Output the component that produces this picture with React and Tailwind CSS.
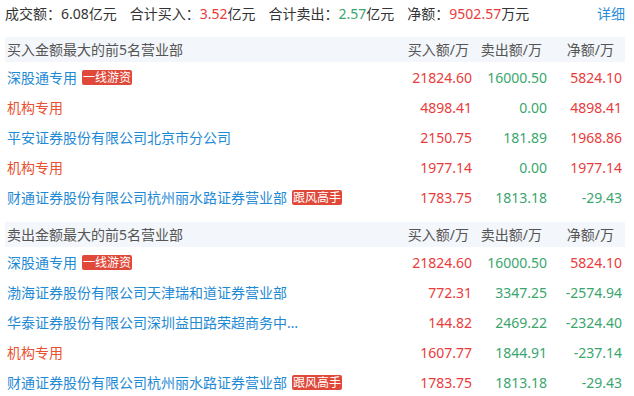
import React from 'react';

const buyList = [
  { name: '深股通专用', tag: '一线游资', buy: '21824.60', sell: '16000.50', net: '5824.10', type: 'link' },
  { name: '机构专用', buy: '4898.41', sell: '0.00', net: '4898.41', type: 'org' },
  { name: '平安证券股份有限公司北京市分公司', buy: '2150.75', sell: '181.89', net: '1968.86', type: 'link' },
  { name: '机构专用', buy: '1977.14', sell: '0.00', net: '1977.14', type: 'org' },
  { name: '财通证券股份有限公司杭州丽水路证券营业部', tag: '跟风高手', buy: '1783.75', sell: '1813.18', net: '-29.43', type: 'link' },
];

const sellList = [
  { name: '深股通专用', tag: '一线游资', buy: '21824.60', sell: '16000.50', net: '5824.10', type: 'link' },
  { name: '渤海证券股份有限公司天津瑞和道证券营业部', buy: '772.31', sell: '3347.25', net: '-2574.94', type: 'link' },
  { name: '华泰证券股份有限公司深圳益田路荣超商务中心证券营业部', buy: '144.82', sell: '2469.22', net: '-2324.40', type: 'link' },
  { name: '机构专用', buy: '1607.77', sell: '1844.91', net: '-237.14', type: 'org' },
  { name: '财通证券股份有限公司杭州丽水路证券营业部', tag: '跟风高手', buy: '1783.75', sell: '1813.18', net: '-29.43', type: 'link' },
];

const red = 'text-[#e93b3b]';
const green = 'text-[#3aa66e]';

const Row = ({ r }) => (
  <div className="flex items-center h-[30px] pl-[2px] pr-[3px]">
    <div className="flex-1 min-w-0 flex items-center gap-[5px]">
      {/* long names get cut with an ellipsis, like the original list */}
      <span
        title={r.name}
        className={`truncate max-w-[292px] ${r.type === 'org' ? 'text-[#e8502f]' : 'text-[#1f8ad4]'}`}
      >
        {r.name}
      </span>
      {r.tag && (
        <span className="shrink-0 bg-[#e0493a] text-white text-[12px] leading-[15px] px-[1px] rounded-[2px]">
          {r.tag}
        </span>
      )}
    </div>
    <div className={`w-[75px] text-right ${red}`}>{r.buy}</div>
    <div className={`w-[75px] text-right ${green}`}>{r.sell}</div>
    <div className={`w-[75px] text-right ${r.net.startsWith('-') ? green : red}`}>{r.net}</div>
  </div>
);

const Section = ({ title, rows }) => (
  <div>
    <div className="flex items-center h-[25px] bg-[#f3f6fa] pl-[2px] pr-[3px] text-[#555]">
      <div className="flex-1">{title}</div>
      <div className="w-[75px] text-right pr-[3px]">买入额/万</div>
      <div className="w-[75px] text-right pr-[5px]">卖出额/万</div>
      <div className="w-[75px] text-right pr-[8px]">净额/万</div>
    </div>
    {rows.map((r, i) => (
      <Row key={i} r={r} />
    ))}
  </div>
);

export default function App() {
  return (
    <div
      className="w-[634px] h-[396px] overflow-hidden bg-white pl-[5px] pr-[9px] text-[14px] text-[#333]"
      style={{ fontFamily: '"Noto Sans", "Noto Sans CJK SC", sans-serif' }}
    >
      <div className="flex items-center h-[26px]">
        <div className="flex-1 flex items-center gap-[13px]">
          <span>成交额：6.08亿元</span>
          <span>
            合计买入：<span className={red}>3.52</span>亿元
          </span>
          <span>
            合计卖出：<span className={green}>2.57</span>亿元
          </span>
          <span>
            净额：<span className={red}>9502.57</span>万元
          </span>
        </div>
        <span className="text-[#2a8fd6]">详细</span>
      </div>
      <div className="mt-[11px]">
        <Section title="买入金额最大的前5名营业部" rows={buyList} />
      </div>
      <div className="mt-[10px]">
        <Section title="卖出金额最大的前5名营业部" rows={sellList} />
      </div>
    </div>
  );
}
